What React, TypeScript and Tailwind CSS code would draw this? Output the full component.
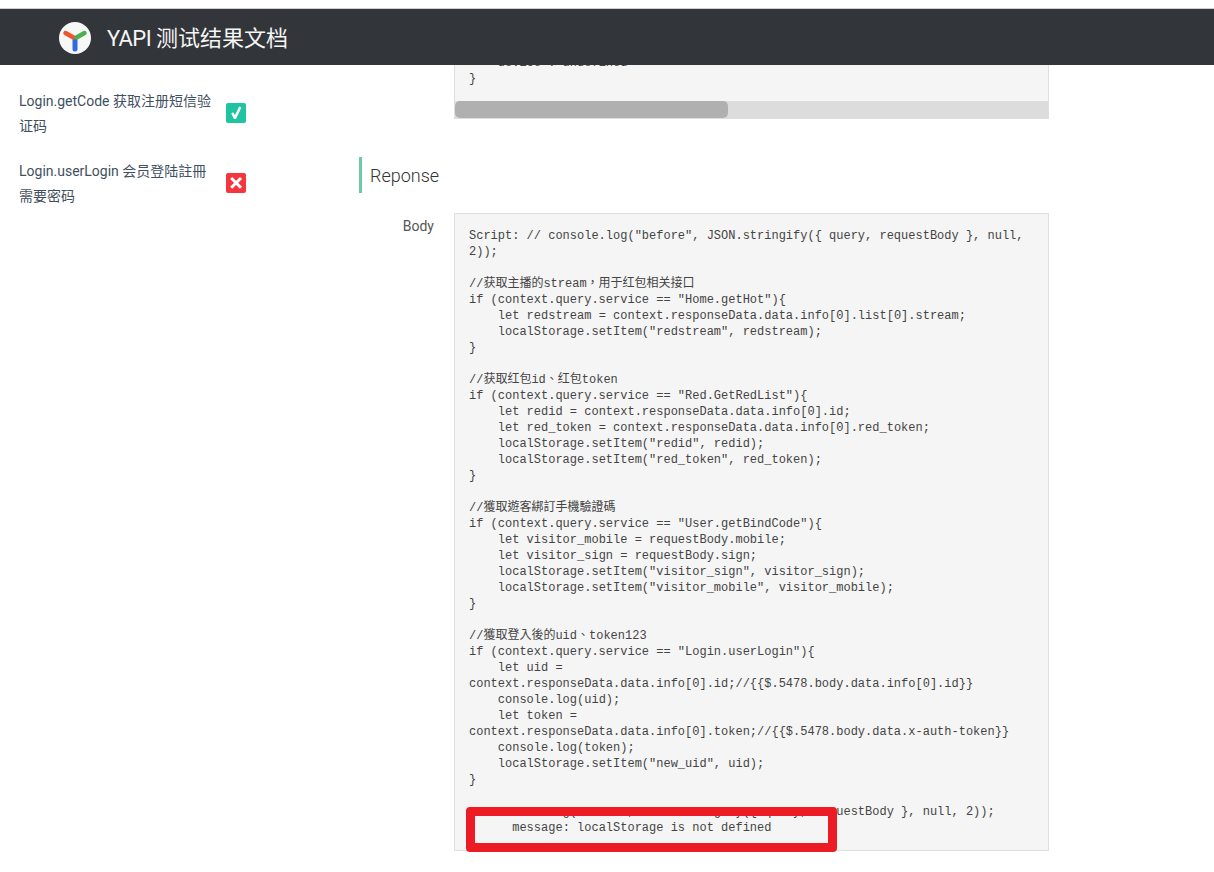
const sansFont = "font-['Roboto','Noto_Sans_CJK_SC',sans-serif]";

const interfaces = [
    { title: "Login.getCode 获取注册短信验证码", ok: true },
    { title: "Login.userLogin 会员登陆註冊需要密码", ok: false }
];

const bodyText = `Script: // console.log("before", JSON.stringify({ query, requestBody }, null, 2));

//获取主播的stream，用于红包相关接口
if (context.query.service == "Home.getHot"){
    let redstream = context.responseData.data.info[0].list[0].stream;
    localStorage.setItem("redstream", redstream);
}

//获取红包id、红包token
if (context.query.service == "Red.GetRedList"){
    let redid = context.responseData.data.info[0].id;
    let red_token = context.responseData.data.info[0].red_token;
    localStorage.setItem("redid", redid);
    localStorage.setItem("red_token", red_token);
}

//獲取遊客綁訂手機驗證碼
if (context.query.service == "User.getBindCode"){
    let visitor_mobile = requestBody.mobile;
    let visitor_sign = requestBody.sign;
    localStorage.setItem("visitor_sign", visitor_sign);
    localStorage.setItem("visitor_mobile", visitor_mobile);
}

//獲取登入後的uid、token123
if (context.query.service == "Login.userLogin"){
    let uid = context.responseData.data.info[0].id;//{{$.5478.body.data.info[0].id}}
    console.log(uid);
    let token = context.responseData.data.info[0].token;//{{$.5478.body.data.x-auth-token}}
    console.log(token);
    localStorage.setItem("new_uid", uid);
}

// console.log("after", JSON.stringify({ query, requestBody }, null, 2));
      message: localStorage is not defined`;

const codeClass =
    "font-['Liberation_Mono','Noto_Sans_CJK_TC',monospace] text-[12px] leading-[16px] text-[#444] whitespace-pre-wrap break-words";

const YapiLogo = () => (
    <svg width="32" height="32" viewBox="0 0 32 32" className="shrink-0">
        <circle cx="16" cy="16" r="16" fill="#f7f7f7" />
        <path d="M16 18 L16 27" stroke="#2f6be0" strokeWidth="5" strokeLinecap="round" />
        <path d="M14.5 15.5 L6.5 11" stroke="#f0562b" strokeWidth="4.5" strokeLinecap="round" />
        <path d="M17.5 15.5 L25.5 11" stroke="#4caf50" strokeWidth="4.5" strokeLinecap="round" />
    </svg>
);

const CheckMark = () => (
    <svg width="20" height="20" viewBox="0 0 20 20">
        <path d="M5.2 10.4 L7.2 9.2 L9 12 L13.2 3.4 L15.4 4.4 L10 16 L8 16 Z" fill="#fff" />
    </svg>
);

const CrossMark = () => (
    <svg width="20" height="20" viewBox="0 0 20 20">
        <path d="M5.2 5 L15 14.8 M15 5 L5.2 14.8" stroke="#fff" strokeWidth="3" />
    </svg>
);

export default function App() {
    return (
        <div className={`relative h-[872px] w-[1214px] overflow-hidden bg-white ${sansFont}`}>
            <div className="h-[9px] border-b border-[#d0d0d0] bg-white" />

            <header className="relative z-10 flex h-[56px] items-center gap-4 bg-[#32363a] pl-[59px] pt-[2px]">
                <YapiLogo />
                <h1 className="mt-[2px] text-[22px] leading-none text-[#f5f5f5]">
                    <span className="tracking-[-0.6px]">YAPI </span>测试结果文档
                </h1>
            </header>

            <main className="flex">
                <aside className="flex w-[359px] shrink-0 flex-col gap-5 pl-[19px] pt-6">
                    {interfaces.map((item) => (
                        <div key={item.title} className="flex items-center">
                            <p className="w-[195px] text-[14px] leading-[25px] text-[#3f5060]">{item.title}</p>
                            <span
                                className={`mb-[2px] ml-3 flex h-5 w-5 items-center justify-center rounded-[2px] ${
                                    item.ok ? "bg-[#1fc4a0]" : "bg-[#f5363f]"
                                }`}
                            >
                                {item.ok ? <CheckMark /> : <CrossMark />}
                            </span>
                        </div>
                    ))}
                </aside>

                <section className="w-[690px]">
                    <div className="-mt-[26px] ml-[95px] w-[595px] border border-[#dedede] bg-[#f5f5f5]">
                        <pre className={`px-[14px] pb-[14px] pt-[15px] ${codeClass}`}>{`    device : undefined
}`}</pre>
                        <div className="h-[17px] bg-[#dcdcdc]">
                            <div className="h-full w-[273px] rounded-[5px] bg-[#b0b0b0]" />
                        </div>
                    </div>

                    <div className="mt-[38px] flex h-9 items-center border-l-[3px] border-[#6ccba3] pl-2">
                        <h2 className="text-[18px] font-light text-[#333]">Reponse</h2>
                    </div>

                    <div className="mt-5 flex gap-5">
                        <span className="w-[75px] pt-1 text-right text-[14px] leading-[18px] text-[#555]">Body</span>
                        <div className="relative w-[595px] border border-[#dedede] bg-[#f5f5f5] px-[14px] py-[14px]">
                            <pre className={codeClass}>{bodyText}</pre>
                            {/* the annotation hides the top of the covered log line */}
                            <div className="absolute left-[11px] top-[587px] h-[7px] w-[371px] bg-[#f5f5f5]" />
                            <div className="absolute left-[11px] top-[593px] h-[45px] w-[371px] rounded-[4px] border-[9px] border-[#ed1c24]" />
                        </div>
                    </div>
                </section>
            </main>
        </div>
    );
}
